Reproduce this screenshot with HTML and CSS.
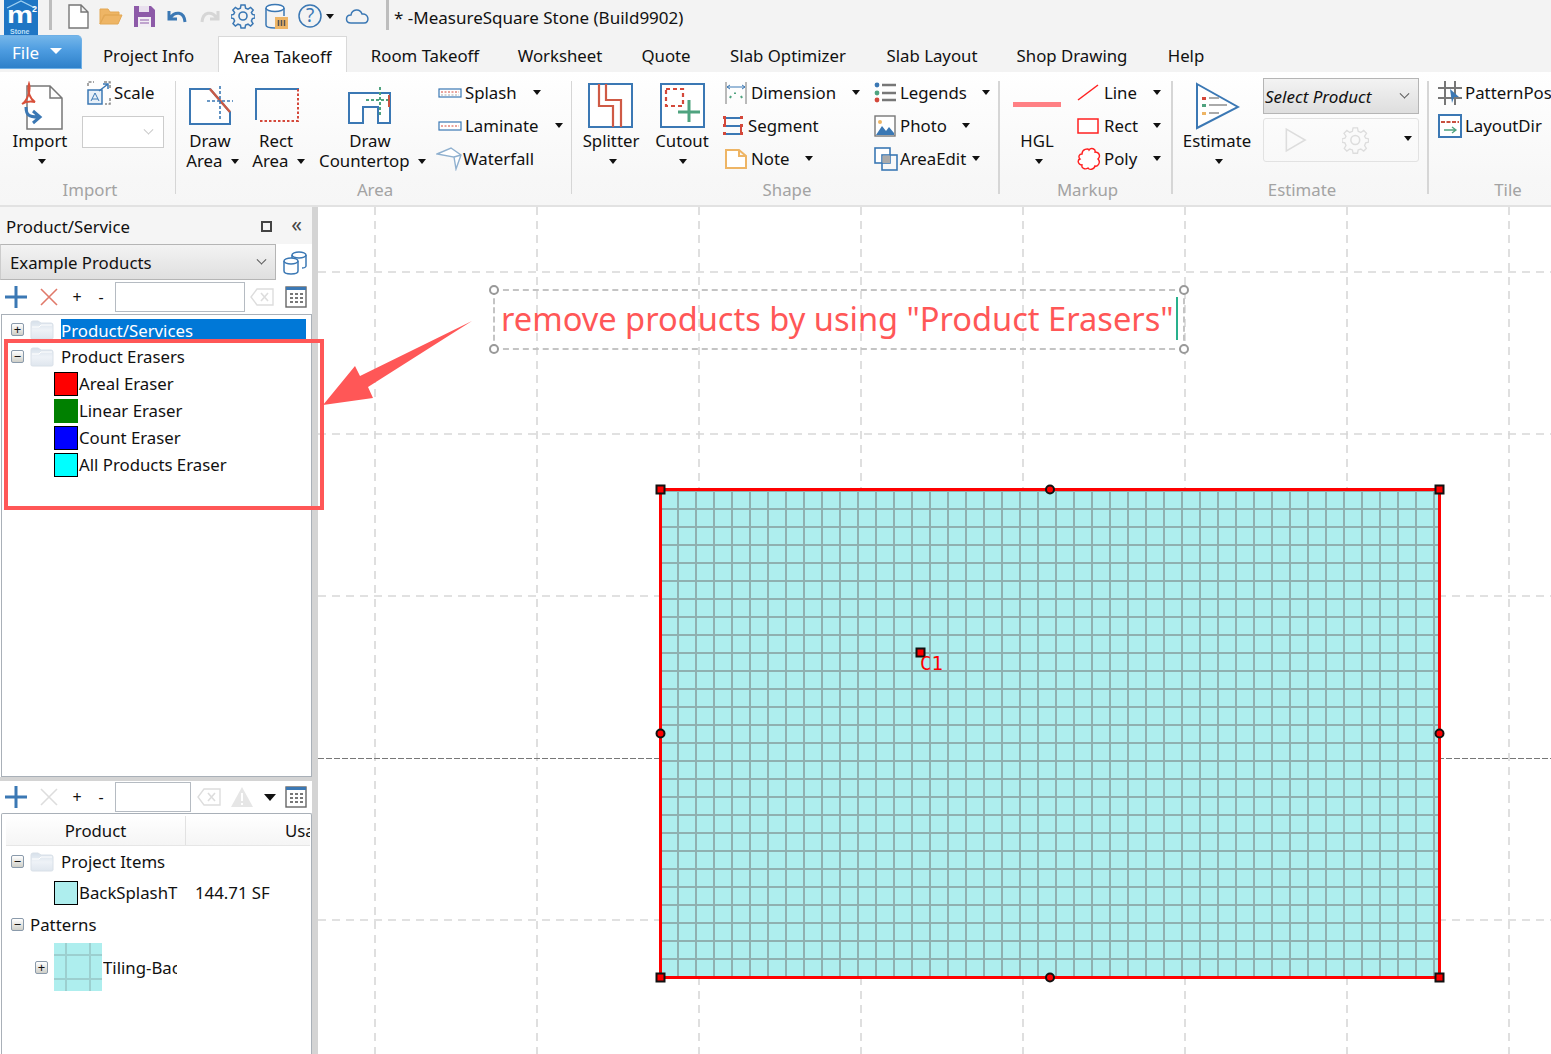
FILE: index.html
```html
<!DOCTYPE html>
<html lang="en">
<head>
<meta charset="utf-8">
<title>MeasureSquare Stone</title>
<link rel="stylesheet" href="styles.css">
</head>
<body>
<div class="app">
  <header class="titlebar">
    <div class="logo">
      <svg width="34" height="35" viewBox="0 0 34 35"><rect x="0" y="0" width="34" height="35" fill="#1f76c4"/><path d="M3 8 L17 1 L31 8" fill="none" stroke="#9fd0f2" stroke-width="1.2"/><text x="3" y="23" class="logo-m" textLength="26" lengthAdjust="spacingAndGlyphs">m</text><text x="28" y="12" class="logo-2">2</text><text x="6" y="34" class="logo-s">Stone</text></svg>
    </div>
    <span class="qsep first"></span>
    <div class="qat">
      <svg class="qi" width="24" height="26" viewBox="0 0 24 26"><path d="M3 2 H15 L22 9 V25 H3 Z M15 2 V9 H22" fill="#fff" stroke="#777" stroke-width="1.4"/></svg>
      <svg class="qi" width="24" height="26" viewBox="0 0 24 26"><path d="M1 21 V6 H9 L11 9 H20 V12 H6 L1 21 L5 12 H23 L19 21 Z" fill="#eeb565" stroke="#e3a855" stroke-width="1"/></svg>
      <svg class="qi" width="24" height="26" viewBox="0 0 24 26"><path d="M2 3 H19 L23 7 V24 H2 Z" fill="#8d5aa8"/><rect x="7" y="3" width="10" height="6" fill="#e9e0ee"/><rect x="6" y="14" width="13" height="10" fill="#f2eef4"/><path d="M8 17 H17 M8 20 H17" stroke="#8d5aa8"/></svg>
      <svg class="qi" width="24" height="26" viewBox="0 0 24 26"><path d="M4 8 V16 H12 M5 15 C10 8 19 8 20 19" fill="none" stroke="#3b78b4" stroke-width="3"/></svg>
      <svg class="qi" width="24" height="26" viewBox="0 0 24 26"><path d="M20 8 V16 H12 M19 15 C14 8 5 8 4 19" fill="none" stroke="#d6d6d6" stroke-width="3"/></svg>
      <svg class="qi" width="24" height="26" viewBox="0 0 24 26"><circle cx="12" cy="13" r="4" fill="none" stroke="#3b78b4" stroke-width="1.6"/><path d="M10 2 H14 L14.6 5.2 L17 6.2 L19.6 4.4 L22.2 7 L20.4 9.6 L21.4 11.4 L24 12 V15 L21.4 15.6 L20.4 18 L22 20.6 L19.6 23 L17 21.2 L14.6 22 L14 25 H10 L9.4 22 L7 21.2 L4.4 23 L2 20.6 L3.6 18 L2.6 15.6 L0 15 V12 L2.6 11.4 L3.6 9.6 L1.8 7 L4.4 4.4 L7 6.2 L9.4 5.2 Z" fill="none" stroke="#3b78b4" stroke-width="1.5"/></svg>
      <svg class="qi" width="24" height="26" viewBox="0 0 24 26"><path d="M2 5 V22 C2 24 5 25 11 25 M20 5 V13" fill="none" stroke="#3b78b4" stroke-width="1.5"/><ellipse cx="11" cy="5" rx="9" ry="3.5" fill="#fff" stroke="#3b78b4" stroke-width="1.5"/><rect x="11" y="14" width="13" height="12" fill="#eeb565"/><path d="M14.5 17 V23 M17.5 17 V23 M20.5 17 V23" stroke="#555" stroke-width="1.5"/></svg>
      <svg class="qi help" width="24" height="26" viewBox="0 0 24 26"><circle cx="12" cy="13" r="11" fill="none" stroke="#3b78b4" stroke-width="1.5"/><text x="12" y="19" class="help-q">?</text></svg>
      <span class="tri qtri"></span>
      <svg class="qi cloud" width="26" height="26" viewBox="0 0 26 26"><path d="M7 20 C1 20 1 12 7 12 C8 6 16 5 18 11 C25 10 26 20 20 20 Z" fill="none" stroke="#3b78b4" stroke-width="1.5"/></svg>
    </div>
    <span class="qsep second"></span>
    <span class="doc-title">* -MeasureSquare Stone (Build9902)</span>
  </header>

  <nav class="tabs">
    <div class="file-tab">File<span class="file-tri"></span></div>
    <div class="tab first-tab">Project Info</div>
    <div class="tab active">Area Takeoff</div>
    <div class="tab">Room Takeoff</div>
    <div class="tab">Worksheet</div>
    <div class="tab">Quote</div>
    <div class="tab">Slab Optimizer</div>
    <div class="tab">Slab Layout</div>
    <div class="tab">Shop Drawing</div>
    <div class="tab">Help</div>
  </nav>

  <section class="ribbon">
    <div class="group g-import">
      <div class="group-body">
        <div class="big w-import">
          <svg class="big-icon" width="50" height="50" viewBox="0 0 50 50"><path d="M12 5 H35 L47 17 V48 H12 Z M35 5 V17 H47" fill="#fff" stroke="#777" stroke-width="1.5"/><path d="M7 23 C12 20 16 10 14 3 C12 10 15 18 20 21 C14 20 10 21 7 23 Z" fill="none" stroke="#d8503a" stroke-width="2"/><path d="M11 26 C11 34 14 36 23 36 M18 30 L25 36 L18 42" fill="none" stroke="#3b78b4" stroke-width="3"/></svg>
          <span class="lbl">Import</span><span class="tri"></span>
        </div>
        <div class="stack s-scale">
          <div class="row"><svg class="ri" width="24" height="24" viewBox="0 0 24 24"><path d="M1 5 V1 H7 M17 1 H23 V7 M23 17 V23 H18" fill="none" stroke="#888" stroke-dasharray="3 1.5" stroke-width="1.5"/><rect x="1" y="9" width="14" height="14" fill="#e8f0f8" stroke="#3b78b4" stroke-width="1.5"/><path d="M4 20 L8 12 L12 20 M5 18 H11" fill="none" stroke="#3b78b4"/><path d="M12 10 L21 3 M16 3 H21 V8" fill="none" stroke="#3b78b4" stroke-width="1.5"/></svg><span class="lbl tight">Scale</span></div>
          <div class="mini-combo"><span class="chev pale"></span></div>
        </div>
      </div>
      <div class="group-name">Import</div>
    </div>

    <div class="group g-area">
      <div class="group-body">
        <div class="big w-draw">
          <svg class="big-icon" width="46" height="46" viewBox="0 0 46 46"><path d="M3 6 H23 L43 29 V41 H3 Z" fill="#fff" stroke="#3b78b4" stroke-width="2"/><path d="M23 6 L43 29" stroke="#c95a45" stroke-width="2.4"/><path d="M33 3 V36 M20 18 H46" stroke="#3b78b4" stroke-width="1.6" stroke-dasharray="3 2"/></svg>
          <span class="lbl">Draw<br>Area <i class="tri inl"></i></span>
        </div>
        <div class="big w-rect">
          <svg class="big-icon" width="46" height="46" viewBox="0 0 46 46"><path d="M46 6 H3 V37" fill="none" stroke="#3b78b4" stroke-width="2"/><path d="M45 6 V38 H5" fill="none" stroke="#d4483a" stroke-width="2" stroke-dasharray="2.5 2"/></svg>
          <span class="lbl">Rect<br>Area <i class="tri inl"></i></span>
        </div>
        <div class="big w-counter">
          <svg class="big-icon" width="46" height="46" viewBox="0 0 46 46"><path d="M2 10 H43 V40 H31 V24 H16 V40 H2 Z" fill="#fff" stroke="#3b78b4" stroke-width="2"/><path d="M33 4 V32 M19 17 H44" stroke="#4fa37f" stroke-width="2" stroke-dasharray="3 2"/><path d="M42 12 V24" stroke="#c9503e" stroke-width="2"/></svg>
          <span class="lbl">Draw<br>Countertop <i class="tri inl"></i></span>
        </div>
        <div class="stack s-splash">
          <div class="row"><svg class="ri" width="24" height="14" viewBox="0 0 24 14"><rect x="1" y="3" width="22" height="8" fill="#fff" stroke="#3b78b4" stroke-width="1.2"/><path d="M3 6 H21" stroke="#d4483a" stroke-dasharray="2 1.5"/><path d="M3 9 H21" stroke="#aaa" stroke-dasharray="2 1.5"/></svg><span class="lbl rl">Splash</span><i class="tri rt"></i></div>
          <div class="row"><svg class="ri" width="24" height="14" viewBox="0 0 24 14"><rect x="1" y="3" width="22" height="8" fill="#fff" stroke="#3b78b4" stroke-width="1.2"/><path d="M3 7 H21" stroke="#d4483a" stroke-dasharray="2 1.5"/></svg><span class="lbl rl">Laminate</span><i class="tri rt"></i></div>
          <div class="row"><svg class="ri wf" width="26" height="24" viewBox="0 0 26 24"><path d="M1 7 L15 1 L25 8 L20 22 L18 10 Z M18 10 L25 8" fill="#fff" stroke="#8fb0cf" stroke-width="1.4"/></svg><span class="lbl">Waterfall</span></div>
        </div>
      </div>
      <div class="group-name">Area</div>
    </div>

    <div class="group g-shape">
      <div class="group-body">
        <div class="big w-split">
          <svg class="big-icon" width="46" height="46" viewBox="0 0 46 46"><rect x="1" y="1" width="43" height="43" fill="#fff" stroke="#3b78b4" stroke-width="2"/><path d="M11 1 V23 H25 V44 M18 1 V17 H33 V44" fill="none" stroke="#cf5a45" stroke-width="2.2"/></svg>
          <span class="lbl">Splitter</span><span class="tri"></span>
        </div>
        <div class="big w-cut">
          <svg class="big-icon" width="46" height="46" viewBox="0 0 46 46"><rect x="1" y="1" width="43" height="43" fill="#fff" stroke="#3b78b4" stroke-width="2"/><rect x="6" y="6" width="17" height="17" fill="none" stroke="#d4483a" stroke-width="2.2" stroke-dasharray="4 3"/><path d="M29 17 V39 M18 29 H40" stroke="#4fa37f" stroke-width="3"/></svg>
          <span class="lbl">Cutout</span><span class="tri"></span>
        </div>
        <div class="stack s-dim">
          <div class="row"><svg class="ri" width="22" height="22" viewBox="0 0 22 22"><path d="M1 0 V22 M21 0 V22" stroke="#777"/><path d="M2 5 H20 M2 5 L5 3 M2 5 L5 7 M20 5 L17 3 M20 5 L17 7" stroke="#3b78b4" fill="none"/><path d="M5 16 L6 14 M10 12 V10.5 M16 14 L17 16" stroke="#4fa37f" stroke-width="2"/></svg><span class="lbl d-l">Dimension</span><i class="tri rt"></i></div>
          <div class="row seg"><svg class="ri" width="22" height="22" viewBox="0 0 22 22"><path d="M2 3 H20 M2 11 H20 M2 19 H20" stroke="#3b78b4" stroke-width="2"/><path d="M3 3 V11 M19 11 V19" stroke="#d4483a" stroke-width="2"/><path d="M1 1 h3 v3 h-3z M18 1 h3 v3 h-3z M1 17 h3 v3 h-3z M18 17 h3 v3 h-3z M1 9 h3 v3 h-3z M18 9 h3 v3 h-3z" fill="#d4483a"/></svg><span class="lbl">Segment</span></div>
          <div class="row"><svg class="ri" width="22" height="22" viewBox="0 0 22 22"><path d="M1 2 H14 L21 8 V20 H1 Z M14 2 V8 H21" fill="#fff" stroke="#eeb565" stroke-width="2"/></svg><span class="lbl d-l">Note</span><i class="tri rt note"></i></div>
        </div>
        <div class="stack s-leg">
          <div class="row"><svg class="ri" width="22" height="22" viewBox="0 0 22 22"><circle cx="3" cy="3" r="2.4" fill="#3b78b4"/><circle cx="3" cy="11" r="2.4" fill="#4fa37f"/><circle cx="3" cy="18" r="2.4" fill="#d4483a"/><path d="M8 3 H22 M8 11 H22 M8 18 H22" stroke="#777" stroke-width="2.4"/></svg><span class="lbl">Legends</span><i class="tri rt"></i></div>
          <div class="row"><svg class="ri" width="22" height="22" viewBox="0 0 22 22"><rect x="1" y="1" width="20" height="20" fill="#fff" stroke="#777" stroke-width="1.4"/><circle cx="6" cy="7" r="2" fill="#eeb565"/><path d="M2 20 L8 11 L12 16 L15 12 L20 18 V20 Z" fill="#3b78b4"/></svg><span class="lbl">Photo</span><i class="tri rt"></i></div>
          <div class="row"><svg class="ri" width="24" height="24" viewBox="0 0 24 24"><rect x="1" y="1" width="15" height="15" fill="#fff" stroke="#3b78b4" stroke-width="1.6"/><rect x="8" y="8" width="15" height="15" fill="none" stroke="#3b78b4" stroke-width="1.6"/><rect x="8.5" y="8.5" width="7.5" height="7.5" fill="#aaa"/></svg><span class="lbl ae">AreaEdit</span><i class="tri rt ae-t"></i></div>
        </div>
      </div>
      <div class="group-name">Shape</div>
    </div>

    <div class="group g-markup">
      <div class="group-body">
        <div class="big w-hgl">
          <svg class="big-icon" width="48" height="46" viewBox="0 0 48 46"><rect x="0" y="19" width="48" height="5" fill="#ff8084"/></svg>
          <span class="lbl">HGL</span><span class="tri"></span>
        </div>
        <div class="stack s-line">
          <div class="row"><svg class="ri" width="22" height="22" viewBox="0 0 22 22"><path d="M1 18 L21 3" stroke="#ff2020" stroke-width="1.5"/></svg><span class="lbl">Line</span><i class="tri rt"></i></div>
          <div class="row"><svg class="ri" width="22" height="22" viewBox="0 0 22 22"><rect x="1" y="4" width="20" height="14" fill="#fff" stroke="#ff2020" stroke-width="1.5"/></svg><span class="lbl">Rect</span><i class="tri rt"></i></div>
          <div class="row"><svg class="ri" width="24" height="24" viewBox="0 0 24 24"><path d="M5 7 C5 2 11 1 12 3 C14 0 19 2 18 5 C22 5 24 9 21 12 C24 15 21 20 18 19 C17 23 12 23 11 21 C8 23 4 21 5 18 C1 18 0 13 3 12 C1 10 2 7 5 7 Z" fill="#fff" stroke="#ff2020" stroke-width="1.4"/></svg><span class="lbl poly">Poly</span><i class="tri rt"></i></div>
        </div>
      </div>
      <div class="group-name">Markup</div>
    </div>

    <div class="group g-est">
      <div class="group-body">
        <div class="big w-est">
          <svg class="big-icon" width="46" height="48" viewBox="0 0 46 48"><path d="M3 2 L44 25 L3 46 Z" fill="#fff" stroke="#3b78b4" stroke-width="2"/><rect x="8" y="15" width="4" height="3" fill="#d4483a"/><rect x="8" y="22" width="4" height="3" fill="#4fa37f"/><rect x="8" y="30" width="4" height="3" fill="#eeb565"/><path d="M15 16 H25 M15 23 H33 M15 31 H25" stroke="#aaa" stroke-width="2"/></svg>
          <span class="lbl">Estimate</span><span class="tri"></span>
        </div>
        <div class="est-col">
          <div class="product-select"><span class="italic">Select Product</span><span class="chev"></span></div>
          <div class="disabled-box">
            <svg width="30" height="32" viewBox="0 0 30 32"><path d="M3 2 L27 16 L3 30 Z" fill="none" stroke="#ddd" stroke-width="2"/></svg>
            <svg width="34" height="34" viewBox="0 0 24 26"><circle cx="12" cy="13" r="4" fill="none" stroke="#ddd" stroke-width="1.4"/><path d="M10 2 H14 L14.6 5.2 L17 6.2 L19.6 4.4 L22.2 7 L20.4 9.6 L21.4 11.4 L24 12 V15 L21.4 15.6 L20.4 18 L22 20.6 L19.6 23 L17 21.2 L14.6 22 L14 25 H10 L9.4 22 L7 21.2 L4.4 23 L2 20.6 L3.6 18 L2.6 15.6 L0 15 V12 L2.6 11.4 L3.6 9.6 L1.8 7 L4.4 4.4 L7 6.2 L9.4 5.2 Z" fill="none" stroke="#ddd" stroke-width="1.2"/></svg>
            <i class="tri"></i>
          </div>
        </div>
      </div>
      <div class="group-name">Estimate</div>
    </div>

    <div class="group g-tile">
      <div class="group-body">
        <div class="stack s-tile">
          <div class="row"><svg class="ri" width="24" height="24" viewBox="0 0 24 24"><path d="M7 0 V24 M17 0 V24 M0 7 H24 M0 17 H24" stroke="#777" stroke-width="2"/><path d="M12 8 L21 16 L16 16 L14 22 Z" fill="#3b78b4"/></svg><span class="lbl">PatternPos</span></div>
          <div class="row"><svg class="ri" width="24" height="24" viewBox="0 0 24 24"><rect x="1" y="1" width="22" height="22" fill="#fff" stroke="#3b78b4" stroke-width="2"/><path d="M3 8 H21" stroke="#c9503e" stroke-width="2" stroke-dasharray="4 1.5"/><path d="M6 16 H18 M14 13 L18 16 L14 19" fill="none" stroke="#4fa37f" stroke-width="1.3"/></svg><span class="lbl">LayoutDir</span></div>
        </div>
      </div>
      <div class="group-name">Tile</div>
    </div>
  </section>

  <main class="workspace">
    <aside class="side">
      <div class="panel-head"><span>Product/Service</span><span class="head-icons"><span class="maxi"></span><span class="chevs">«</span></span></div>
      <div class="catalog-row">
        <div class="combo"><span>Example Products</span><span class="chev"></span></div>
        <svg width="26" height="26" viewBox="0 0 26 26"><ellipse cx="17" cy="6" rx="7" ry="3" fill="#fff" stroke="#3b78b4" stroke-width="1.5"/><path d="M10 6 V12 M24 6 V17 C24 18 22 19 20 19" fill="none" stroke="#3b78b4" stroke-width="1.5"/><path d="M2 12 V22 C2 26 16 26 16 22 V12" fill="#fff" stroke="#3b78b4" stroke-width="1.5"/><ellipse cx="9" cy="12" rx="7" ry="3" fill="#fff" stroke="#3b78b4" stroke-width="1.5"/></svg>
      </div>
      <div class="toolbar">
        <svg class="t-plus" width="22" height="22" viewBox="0 0 22 22"><path d="M11 0 V22 M0 11 H22" stroke="#3b78b4" stroke-width="3"/></svg>
        <svg class="t-x" width="18" height="18" viewBox="0 0 18 18"><path d="M1 1 L17 17 M17 1 L1 17" stroke="#e0796a" stroke-width="1.6"/></svg>
        <span class="t-pm p1">+</span><span class="t-pm p2">-</span>
        <div class="t-input wide"></div>
        <svg class="t-back" width="24" height="18" viewBox="0 0 24 18"><path d="M7 1 H23 V17 H7 L1 9 Z" fill="#fff" stroke="#ddd" stroke-width="1.4"/><path d="M11 5 L18 13 M18 5 L11 13" stroke="#ddd" stroke-width="1.6"/></svg>
        <svg class="t-grid" width="22" height="22" viewBox="0 0 22 22"><rect x="1" y="1" width="20" height="20" fill="#fff" stroke="#666" stroke-width="1.4"/><rect x="1" y="1" width="20" height="3" fill="#3b78b4"/><path d="M5 7 h3 v2 h-3z M10 7 h3 v2 h-3z M15 7 h3 v2 h-3z M5 11 h3 v2 h-3z M10 11 h3 v2 h-3z M15 11 h3 v2 h-3z M5 15 h3 v2 h-3z M10 15 h3 v2 h-3z M15 15 h3 v2 h-3z" fill="#777"/></svg>
      </div>
      <div class="tree top-tree">
        <div class="node"><span class="exp">+</span><svg class="folder" width="24" height="21" viewBox="0 0 24 21"><defs><linearGradient id="fold" x1="0" y1="0" x2="0" y2="1"><stop offset="0" stop-color="#d6e0ea"/><stop offset="0.5" stop-color="#eef2f7"/><stop offset="1" stop-color="#dfe6ee"/></linearGradient></defs><path d="M1 4 Q1 2 3 2 H8 L11 4 H21 Q23 4 23 6 V19 Q23 20 21 20 H3 Q1 20 1 19 Z" fill="url(#fold)" stroke="#d9e0e8"/><path d="M2 8 H9 L11 6 H22" fill="none" stroke="#fff"/></svg><span class="sel">Product/Services</span></div>
        <div class="node"><span class="exp">−</span><svg class="folder" width="24" height="21" viewBox="0 0 24 21"><path d="M1 4 Q1 2 3 2 H8 L11 4 H21 Q23 4 23 6 V19 Q23 20 21 20 H3 Q1 20 1 19 Z" fill="url(#fold)" stroke="#d9e0e8"/><path d="M2 8 H9 L11 6 H22" fill="none" stroke="#fff"/></svg><span class="name">Product Erasers</span></div>
        <div class="node leaf"><span class="sw red"></span><span>Areal Eraser</span></div>
        <div class="node leaf"><span class="sw green"></span><span>Linear Eraser</span></div>
        <div class="node leaf"><span class="sw blue"></span><span>Count Eraser</span></div>
        <div class="node leaf"><span class="sw cyan"></span><span>All Products Eraser</span></div>
      </div>
      <div class="hsplit"></div>
      <div class="toolbar second-bar">
        <svg class="t-plus" width="22" height="22" viewBox="0 0 22 22"><path d="M11 0 V22 M0 11 H22" stroke="#3b78b4" stroke-width="3"/></svg>
        <svg class="t-x" width="18" height="18" viewBox="0 0 18 18"><path d="M1 1 L17 17 M17 1 L1 17" stroke="#ddd" stroke-width="1.6"/></svg>
        <span class="t-pm p1">+</span><span class="t-pm p2">-</span>
        <div class="t-input narrow"></div>
        <svg class="t-back" width="24" height="18" viewBox="0 0 24 18"><path d="M7 1 H23 V17 H7 L1 9 Z" fill="#fff" stroke="#ddd" stroke-width="1.4"/><path d="M11 5 L18 13 M18 5 L11 13" stroke="#ddd" stroke-width="1.6"/></svg>
        <svg class="t-warn" width="24" height="22" viewBox="0 0 24 22"><path d="M12 1 L23 21 H1 Z" fill="#e6e6e6"/><path d="M12 7 V15 M12 17 V19" stroke="#fff" stroke-width="2"/></svg>
        <i class="tri big-tri"></i>
        <svg class="t-grid" width="22" height="22" viewBox="0 0 22 22"><rect x="1" y="1" width="20" height="20" fill="#fff" stroke="#666" stroke-width="1.4"/><rect x="1" y="1" width="20" height="3" fill="#3b78b4"/><path d="M5 7 h3 v2 h-3z M10 7 h3 v2 h-3z M15 7 h3 v2 h-3z M5 11 h3 v2 h-3z M10 11 h3 v2 h-3z M15 11 h3 v2 h-3z M5 15 h3 v2 h-3z M10 15 h3 v2 h-3z M15 15 h3 v2 h-3z" fill="#777"/></svg>
      </div>
      <div class="tree bottom-tree">
        <div class="grid-head"><span class="col-a">Product</span><span class="col-b">Usa</span></div>
        <div class="node pi"><span class="exp">−</span><svg class="folder" width="24" height="21" viewBox="0 0 24 21"><path d="M1 4 Q1 2 3 2 H8 L11 4 H21 Q23 4 23 6 V19 Q23 20 21 20 H3 Q1 20 1 19 Z" fill="url(#fold)" stroke="#d9e0e8"/><path d="M2 8 H9 L11 6 H22" fill="none" stroke="#fff"/></svg><span class="name">Project Items</span></div>
        <div class="node leaf bs"><span class="sw tile-sw"></span><span class="bs-name">BackSplashT</span><span>144.71 SF</span></div>
        <div class="node pat"><span class="exp">−</span><span>Patterns</span></div>
        <div class="node til"><span class="exp">+</span><span class="thumb"></span><span class="til-name">Tiling-Back</span></div>
      </div>
    </aside>
    <div class="vsplit"></div>
    <div class="canvas">
      <svg class="drawing" width="1233" height="847" viewBox="318 207 1233 847">
        <defs>
          <pattern id="tiles" x="660" y="491" width="18" height="18" patternUnits="userSpaceOnUse">
            <rect x="0" y="0" width="18" height="18" fill="#aeeeee"/>
            <path d="M0 0.5 H18 M0 17.5 H18 M0.5 0 V18 M17.5 0 V18" stroke="#8fb0b0" stroke-width="1"/>
          </pattern>
        </defs>
        <g class="grid-lines">
          <path d="M375 207 V1054 M537 207 V1054 M699 207 V1054 M861 207 V1054 M1023 207 V1054 M1185 207 V1054 M1347 207 V1054 M1509 207 V1054"/>
          <path d="M318 272 H1551 M318 434 H1551 M318 596 H1551 M318 920 H1551"/>
        </g>
        <path class="axis" d="M318 758.5 H1551"/>
        <polygon points="472,321 360,376 355,366 323,405 373,398 368,387" fill="#ff5757"/>
        <rect x="660.5" y="489.5" width="779" height="488" fill="url(#tiles)" stroke="#ff0000" stroke-width="3"/>
        <g class="hd">
          <rect x="656.5" y="485.5" width="8" height="8"/><rect x="1435.5" y="485.5" width="8" height="8"/>
          <rect x="656.5" y="973.5" width="8" height="8"/><rect x="1435.5" y="973.5" width="8" height="8"/>
          <rect x="916.5" y="648.5" width="8" height="8"/>
          <circle cx="1050" cy="489.5" r="4"/><circle cx="660.5" cy="733.5" r="4"/><circle cx="1439.5" cy="733.5" r="4"/><circle cx="1050" cy="977.5" r="4"/>
        </g>
        <text x="920" y="670" class="c1">C1</text>
      </svg>
      <div class="note-box"><span class="note-text">remove products by using "Product Erasers"</span><span class="caret"></span>
        <i class="h h1"></i><i class="h h2"></i><i class="h h3"></i><i class="h h4"></i>
      </div>
    </div>
  </main>
  <div class="callout"></div>
</div>
</body>
</html>
```

FILE: styles.css
```css
* { box-sizing: border-box; }
html, body { margin: 0; padding: 0; }
body { font-family: "Noto Sans", "Open Sans", sans-serif; font-size: 17px; color: #111; background: #fff; }
.app { position: relative; width: 1551px; height: 1054px; overflow: hidden; display: flex; flex-direction: column; background: #f3f3f3; }

/* title bar */
.titlebar { height: 35px; flex: none; display: flex; align-items: flex-start; }
.logo { width: 38px; padding-left: 4px; height: 35px; }
.logo-m { font: bold 24px "Liberation Sans", sans-serif; fill: #fff; }
.logo-2 { font: bold 9px "Liberation Sans", sans-serif; fill: #fff; }
.logo-s { font: bold 7px "Liberation Sans", sans-serif; fill: #bfe0f7; }
.qsep { width: 3px; height: 30px; background: #bdbdbd; flex: none; }
.qsep.first { margin-left: 11px; }
.qsep.second { margin-left: 16px; }
.qat { display: flex; align-items: center; height: 32px; margin-left: 14px; }
.qi { flex: none; margin-right: 9px; }
.qi.help { margin-right: 4px; margin-left: 1px; }
.help-q { font: 19px "Noto Sans", sans-serif; fill: #3b78b4; text-anchor: middle; }
.qtri { margin-right: 10px; }
.qi.cloud { margin-right: 0; }
.doc-title { margin-left: 5px; line-height: 35px; font-size: 17px; white-space: nowrap; }

/* triangles & chevrons */
.tri { display: inline-block; width: 0; height: 0; border-left: 4px solid transparent; border-right: 4px solid transparent; border-top: 5px solid #111; flex: none; }
.tri.inl { vertical-align: 3px; margin-left: 2px; margin-right: -5px; }
.tri.big-tri { border-left-width: 6px; border-right-width: 6px; border-top-width: 7px; }
.chev { display: inline-block; width: 7px; height: 7px; border-right: 1.5px solid #555; border-bottom: 1.5px solid #555; transform: rotate(45deg) translate(-2px, -2px); flex: none; }
.chev.pale { border-color: #c8c8c8; }

/* tabs */
.tabs { height: 37px; flex: none; display: grid; grid-template-columns: 82px 136px 129px 156px 114px 98px 146px 142px 138px 90px; align-items: stretch; }
.file-tab { height: 34px; background: linear-gradient(#74b6ea, #4d9ce0 45%, #2e80c9); color: #fff; border: 1px solid #6fb0e6; border-left: 0; border-radius: 0 5px 0 0; display: flex; align-items: center; padding-left: 12px; gap: 11px; }
.file-tri { width: 0; height: 0; border-left: 6px solid transparent; border-right: 6px solid transparent; border-top: 6px solid #fff; margin-bottom: 3px; }
.tab { text-align: center; line-height: 38px; white-space: nowrap; font-size: 16.8px; border-bottom: 1px solid #d9d9d9; padding-top: 2px; }
.tab.first-tab { padding-right: 3px; }
.tab.active { background: #fff; border: 1px solid #d9d9d9; border-bottom: 0; height: 37px; margin-top: 1px; padding-top: 0; line-height: 39px; }

/* ribbon */
.ribbon { height: 135px; flex: none; display: flex; background: linear-gradient(#fff, #f7f7f7 80%, #f6f6f6); border-bottom: 2px solid #e2e2e2; }
.group { flex: none; display: flex; flex-direction: column; position: relative; padding-top: 4px; }
.group::after { content: ""; position: absolute; right: 0; top: 9px; bottom: 11px; width: 1px; background: #d6d6d6; }
.g-est::after, .g-markup::after, .g-shape::after { width: 2px; }
.g-tile::after { display: none; }
.g-import { width: 176px; }
.g-area { width: 396px; }
.g-shape { width: 428px; }
.g-markup { width: 173px; }
.g-est { width: 256px; }
.g-tile { width: 156px; }
.group-body { height: 104px; display: flex; flex: none; }
.group-name { text-align: center; color: #a3a3a3; font-size: 16.8px; line-height: 20px; padding-left: 2px; }
.g-import .group-name { padding-left: 4px; }
.big { display: flex; flex-direction: column; align-items: center; text-align: center; flex: none; }
.big-icon { height: 50px; margin-top: 5px; margin-bottom: 0; flex: none; }
.lbl { line-height: 20px; white-space: nowrap; font-size: 16.8px; }
.big .tri { margin-top: 8px; margin-left: 4px; }
.stack { display: flex; flex-direction: column; flex: none; }
.row { height: 33px; display: flex; align-items: center; flex: none; }
.ri { flex: none; }
.w-import { width: 80px; }
.s-scale { margin-left: 2px; width: 90px; }
.s-scale .ri { margin-left: 5px; margin-right: 3px; }
.mini-combo { width: 82px; height: 32px; margin-top: 7px; border: 1px solid #ccc; background: #fff; display: flex; align-items: center; justify-content: flex-end; padding-right: 11px; }

.w-draw { width: 68px; }
.w-rect { width: 64px; }
.w-counter { width: 112px; margin-left: 6px; }
.s-splash { margin-left: 12px; width: 129px; position: relative; }
.rl { margin-left: 3px; }
.s-splash .row { position: relative; }
.s-splash .row .rt { margin-left: 16px; }
.ri.wf { margin-right: 1px; margin-left: -2px; }

.w-split { width: 70px; margin-left: 4px; }
.w-cut { width: 70px; }
.w-cut .big-icon { margin-left: 4px; }
.w-cut .lbl { margin-left: 2px; }
.s-dim { width: 137px; margin-left: 9px; }
.s-dim .rt { margin-left: auto; margin-right: 2px; }
.s-dim .d-l { margin-left: 4px; }
.s-dim .rt.note { margin-left: 16px; margin-right: auto; }
.s-dim .seg { margin-left: -3px; }
.s-dim .seg .lbl { margin-left: 4px; }
.s-leg { width: 120px; margin-left: 11px; }
.s-leg .lbl { margin-left: 4px; }
.s-leg .lbl.ae { margin-left: 2px; }
.s-leg .rt { margin-left: 15px; }
.s-leg .rt.ae-t { margin-left: 6px; }
.s-leg .ri { margin-left: 1px; }

.w-hgl { width: 74px; }
.s-line { margin-left: 3px; width: 86px; }
.s-line .lbl { margin-left: 5px; }
.s-line .lbl.poly { margin-left: 3px; }
.s-line .rt { margin-left: auto; margin-right: 2px; }

.w-est { width: 88px; }
.est-col { margin-left: 2px; width: 156px; display: flex; flex-direction: column; gap: 4px; }
.product-select { height: 36px; margin-top: 2px; border: 1px solid #b5b5b5; background: linear-gradient(#f3f3f3, #dedede); display: flex; align-items: center; justify-content: space-between; padding: 0 10px 0 1px; }
.italic { font-style: italic; font-size: 17px; white-space: nowrap; }
.disabled-box { height: 44px; border: 1px solid #e2e2e2; border-radius: 3px; display: flex; align-items: center; padding: 0 6px 0 20px; gap: 35px; }
.disabled-box .tri { margin-left: auto; margin-bottom: 4px; }

.s-tile { margin-left: 9px; }
.s-tile .lbl { margin-left: 3px; }

/* workspace */
.workspace { flex: 1; min-height: 0; display: flex; background: #fff; }
.side { width: 312px; flex: none; display: flex; flex-direction: column; background: #fff; }
.vsplit { width: 6px; flex: none; background: #d4d4d4; }
.panel-head { height: 37px; flex: none; background: #f5f5f5; display: flex; align-items: center; justify-content: space-between; padding: 2px 10px 0 6px; font-size: 16.8px; }
.head-icons { display: flex; align-items: center; gap: 19px; }
.maxi { width: 11px; height: 11px; border: 2px solid #444; display: block; }
.chevs { font-size: 21px; line-height: 18px; color: #444; margin-bottom: 5px; }
.catalog-row { height: 36px; flex: none; display: flex; align-items: center; gap: 6px; }
.combo { width: 276px; height: 36px; border: 1px solid #b5b5b5; border-left-color: #ccc; background: linear-gradient(#f3f3f3, #dfdfdf); display: flex; align-items: center; justify-content: space-between; padding: 0 10px 0 9px; font-size: 16.8px; }
.toolbar { height: 34px; flex: none; display: flex; align-items: center; padding-left: 5px; }
.t-x { margin-left: 13px; }
.t-pm { font-size: 16px; width: 10px; text-align: center; }
.p1 { margin-left: 14px; }
.p2 { margin-left: 14px; }
.t-input { height: 30px; border: 1px solid #b5bbc2; background: #fff; margin-left: 9px; }
.t-input.wide { width: 130px; }
.t-input.narrow { width: 76px; }
.t-back { margin-left: 5px; }
.t-grid { margin-left: 11px; }
.toolbar .t-warn { margin-left: 9px; }
.toolbar .big-tri { margin-left: 10px; }
.second-bar .t-back { margin-left: 6px; }
.second-bar .t-grid { margin-left: 9px; }
.tree { border: 1px solid #a9b0b8; background: #fff; font-size: 16.8px; margin-left: 1px; }
.top-tree { height: 463px; flex: none; padding-top: 1px; }
.node { height: 27px; display: flex; align-items: center; white-space: nowrap; padding-left: 9px; }
.exp { width: 13px; height: 13px; border: 1px solid #8a9aab; border-radius: 2px; background: linear-gradient(#fff, #cfcfc8); font-size: 13px; line-height: 10px; text-align: center; flex: none; color: #111; }
.folder { margin-left: 6px; flex: none; }
.sel { background: #0078d7; color: #fff; margin-left: 7px; width: 245px; height: 22px; line-height: 24px; overflow: hidden; }
.name { margin-left: 7px; }
.leaf { padding-left: 52px; }
.sw { width: 24px; height: 24px; border: 1px solid #000; flex: none; margin-right: 1px; }
.red { background: #f00; }
.green { background: #008000; border-color: #008000; }
.blue { background: #00f; }
.cyan { background: #0ff; }
.tile-sw { background: #aeeeee; }
.hsplit { height: 4px; flex: none; background: #d4d4d4; }
.second-bar { height: 32px; }
.bottom-tree { flex: 1; min-height: 0; border-bottom: 0; border-radius: 2px 2px 0 0; overflow: hidden; padding: 2px 1px 0 4px; }
.bottom-tree .node { margin-left: -4px; }
.grid-head { height: 30px; display: flex; background: linear-gradient(#fff, #f5f5f5); border-bottom: 1px solid #e6e6e6; overflow: hidden; }
.col-a { width: 180px; text-align: center; line-height: 30px; border-right: 1px solid #e2e2e2; flex: none; }
.col-b { margin-left: 99px; line-height: 30px; flex: none; }
.pi { height: 31px; }
.bs { height: 31px; }
.bs-name { width: 116px; overflow: hidden; flex: none; }
.pat { height: 32px; }
.pat .exp { margin-right: 6px; }
.til { height: 54px; padding-left: 33px; }
.thumb { width: 48px; height: 48px; margin-left: 6px; flex: none; background-color: #aeeeee; background-image: linear-gradient(#9ccfcf, #9ccfcf), linear-gradient(#9ccfcf, #9ccfcf), linear-gradient(#9ccfcf, #9ccfcf), linear-gradient(#9ccfcf, #9ccfcf); background-size: 2px 48px, 2px 48px, 48px 2px, 48px 2px; background-position: 11px 0, 35px 0, 0 11px, 0 35px; background-repeat: no-repeat; }
.til-name { width: 74px; margin-left: 1px; overflow: hidden; flex: none; }

/* canvas */
.canvas { flex: 1; position: relative; background: #fff; overflow: hidden; }
.drawing { display: block; }
.grid-lines path { fill: none; stroke: #d8d8d8; stroke-width: 1.6; stroke-dasharray: 8 6; }
.axis { fill: none; stroke: #777; stroke-width: 1.2; stroke-dasharray: 6 2; }
.hd rect, .hd circle { fill: #f00; stroke: #111; stroke-width: 2; }
.c1 { font: 19px "DejaVu Sans Mono", monospace; fill: #f00; }
.note-box { position: absolute; left: 175px; top: 82px; width: 692px; height: 61px; border: 2px dashed #c4c4c4; display: flex; align-items: center; padding: 0 0 2px 6px; }
.note-text { font-size: 32.6px; color: #ff5757; white-space: nowrap; }
.caret { width: 2px; height: 43px; background: #28b08c; margin-left: 2px; }
.h { position: absolute; width: 10px; height: 10px; border: 2px solid #999; border-radius: 50%; background: #fff; }
.h1 { left: -6px; top: -6px; }
.h2 { right: -6px; top: -6px; }
.h3 { left: -6px; bottom: -6px; }
.h4 { right: -6px; bottom: -6px; }
.callout { position: absolute; left: 4px; top: 339px; width: 320px; height: 171px; border: 4px solid #ff5757; pointer-events: none; }
```
